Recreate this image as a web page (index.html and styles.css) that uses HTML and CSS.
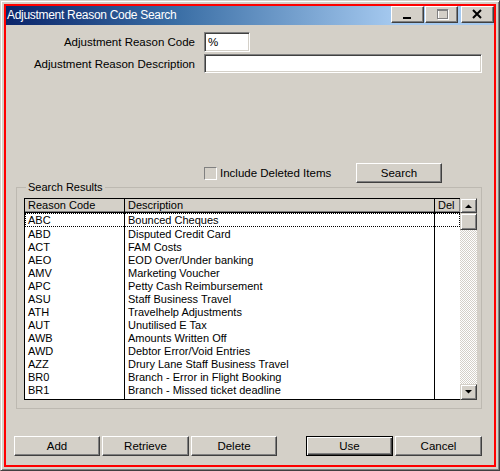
FILE: index.html
```html
<!DOCTYPE html>
<html>
<head>
<meta charset="utf-8">
<link rel="stylesheet" href="styles.css">
</head>
<body>
<div class="window">
  <div class="frame">
    <div class="titlebar">
      <span class="title">Adjustment Reason Code Search</span>
      <div class="tbtns">
        <div class="tbtn"><svg width="31" height="15" viewBox="0 0 31 15"><rect x="11" y="10" width="8" height="2" fill="#000"/></svg></div>
        <div class="tbtn"><svg width="31" height="15" viewBox="0 0 31 15"><rect x="12.5" y="3.5" width="10" height="9" fill="none" stroke="#fff"/><rect x="11.5" y="2.5" width="10" height="9" fill="none" stroke="#808080"/><rect x="11" y="2" width="11" height="2" fill="#808080"/></svg></div>
        <div class="tbtn close"><svg width="31" height="15" viewBox="0 0 31 15"><path d="M11 3L19 11M19 3L11 11" stroke="#000" stroke-width="2" fill="none"/></svg></div>
      </div>
    </div>
    <div class="client">
      <div class="form">
        <label class="lbl">Adjustment Reason Code</label>
        <div class="input code">%</div>
        <label class="lbl">Adjustment Reason Description</label>
        <div class="input desc"></div>
      </div>
      <div class="filter-row">
        <span class="check"></span>
        <span class="check-label">Include Deleted Items</span>
        <button class="btn">Search</button>
      </div>
      <fieldset class="results">
        <legend>Search Results</legend>
        <div class="listview">
          <div class="lv-main">
            <div class="lv-head">
              <div class="hc c1">Reason Code</div>
              <div class="hc c2">Description</div>
              <div class="hc c3">Del</div>
            </div>
            <div class="lv-body">
              <div class="row focus"><span class="c1">ABC</span><span class="c2">Bounced Cheques</span></div>
              <div class="row"><span class="c1">ABD</span><span class="c2">Disputed Credit Card</span></div>
              <div class="row"><span class="c1">ACT</span><span class="c2">FAM Costs</span></div>
              <div class="row"><span class="c1">AEO</span><span class="c2">EOD Over/Under banking</span></div>
              <div class="row"><span class="c1">AMV</span><span class="c2">Marketing Voucher</span></div>
              <div class="row"><span class="c1">APC</span><span class="c2">Petty Cash Reimbursement</span></div>
              <div class="row"><span class="c1">ASU</span><span class="c2">Staff Business Travel</span></div>
              <div class="row"><span class="c1">ATH</span><span class="c2">Travelhelp Adjustments</span></div>
              <div class="row"><span class="c1">AUT</span><span class="c2">Unutilised E Tax</span></div>
              <div class="row"><span class="c1">AWB</span><span class="c2">Amounts Written Off</span></div>
              <div class="row"><span class="c1">AWD</span><span class="c2">Debtor Error/Void Entries</span></div>
              <div class="row"><span class="c1">AZZ</span><span class="c2">Drury Lane Staff Business Travel</span></div>
              <div class="row"><span class="c1">BR0</span><span class="c2">Branch - Error in Flight Booking</span></div>
              <div class="row"><span class="c1">BR1</span><span class="c2">Branch - Missed ticket deadline</span></div>
            </div>
          </div>
          <div class="scrollbar">
            <div class="sb-btn up"><svg width="7" height="4" viewBox="0 0 7 4"><path d="M0 4H7L3.5 0.5Z" fill="#000"/></svg></div>
            <div class="sb-thumb"></div>
            <div class="sb-track"></div>
            <div class="sb-btn down"><svg width="7" height="4" viewBox="0 0 7 4"><path d="M0 0H7L3.5 3.5Z" fill="#000"/></svg></div>
          </div>
        </div>
      </fieldset>
      <div class="actions">
        <button class="btn w86">Add</button>
        <button class="btn w87">Retrieve</button>
        <button class="btn w86">Delete</button>
        <button class="btn w87 default use">Use</button>
        <button class="btn w87">Cancel</button>
      </div>
    </div>
  </div>
</div>
</body>
</html>
```
FILE: styles.css
```css
* { box-sizing: border-box; }
html, body { margin: 0; padding: 0; background: #d4d0c8; }
body { font-family: "Liberation Sans", Arial, sans-serif; font-size: 11.5px; color: #000; }

.window {
  width: 500px; height: 471px;
  border: 1px solid; border-color: #d4d0c8 #404040 #404040 #d4d0c8;
  box-shadow: inset 1px 1px #fff, inset -1px -1px #808080;
  padding: 3px;
  background: #d4d0c8;
}
.frame {
  height: 100%;
  border: 2px solid #ff0000;
  display: flex; flex-direction: column;
}
.titlebar {
  height: 19px; flex: none;
  display: flex; align-items: flex-start;
  background: linear-gradient(to right, #0a246a 0%, #3a6ea5 35%, #a6caf0 80%, #a6caf0 100%);
}
.title {
  color: #fff; font-size: 12px; letter-spacing: -0.3px;
  line-height: 19px; padding-left: 1px; white-space: nowrap;
  flex: 1;
}
.tbtns { display: flex; }
.tbtn {
  width: 33px; height: 17px;
  background: #d4d0c8;
  border: 1px solid; border-color: #fff #404040 #404040 #fff;
  box-shadow: inset -1px -1px #808080;
  display: flex; align-items: center; justify-content: center;
  margin-left: 1px;
}
.tbtn svg { display: block; }
.tbtn.close { margin-left: 3px; }

.client { flex: 1; display: flex; flex-direction: column; }

.form {
  display: grid;
  grid-template-columns: 189px auto;
  column-gap: 9px; row-gap: 2px;
  padding-top: 7px;
  align-items: center;
}
.lbl { text-align: right; white-space: nowrap; }
.input {
  background: #fff;
  border: 1px solid; border-color: #808080 #fff #fff #808080;
  box-shadow: inset 1px 1px #404040, inset -1px -1px #d4d0c8;
  padding: 0 3px; line-height: 18px;
}
.input.code { width: 46px; height: 20px; }
.input.desc { width: 278px; height: 19px; }

.filter-row {
  margin-top: 90px; height: 20px;
  display: flex; align-items: center;
  padding-left: 198px;
}
.check {
  width: 13px; height: 13px; flex: none;
  border: 1px solid; border-color: #808080 #fff #fff #808080;
  background: #d4d0c8;
}
.check-label { width: 139px; flex: none; padding-left: 3px; white-space: nowrap; }

.btn {
  font-family: inherit; font-size: 11.5px; color: #000;
  height: 20px; width: 86px; padding: 0;
  background: #d4d0c8;
  border: 1px solid; border-color: #fff #404040 #404040 #fff;
  box-shadow: inset -1px -1px #808080;
  flex: none;
}
.btn.w86 { width: 86px; }
.btn.w87 { width: 87px; }
.btn.default {
  border-color: #000;
  box-shadow: inset 1px 1px #fff, inset -1px -1px #404040, inset -2px -2px #808080;
}

.results {
  margin: -2px 0 0 10px;
  width: 466px; min-width: 0;
  border: 1px solid #bdb9b1;
  padding: 5px 4px 8px 7px;
}
.results legend {
  font-size: 11px; line-height: 12px;
  padding: 0 2px; margin-left: 2px;
  color: #000;
}
.listview { display: flex; height: 202px; }
.lv-main {
  width: 436px; height: 202px;
  border: 1px solid #000; border-right: none;
  display: flex; flex-direction: column;
  font-size: 11px;
}
.lv-head {
  height: 14px; flex: none; display: flex;
  background: #d4d0c8;
  border-bottom: 1px solid #000;
  box-shadow: inset 0 -1px #808080;
}
.hc {
  line-height: 13px; padding-left: 3px;
  border-right: 1px solid #000;
  white-space: nowrap;
}
.c1 { width: 100px; }
.c2 { width: 310px; }
.c3 { width: 25px; }
.hc.c3 { border-right-color: #808080; }
.lv-body {
  flex: 1;
  background:
    linear-gradient(#000, #000) 99px 0 / 1px 100% no-repeat,
    linear-gradient(#000, #000) 409px 0 / 1px 100% no-repeat,
    #fff;
}
.row { display: flex; height: 13px; line-height: 15px; white-space: nowrap; }
.row span { padding-left: 3px; overflow: hidden; }
.row.focus { outline: 1px dotted #000; outline-offset: -1px; height: 14px; line-height: 15px; }

.scrollbar { width: 17px; height: 202px; display: flex; flex-direction: column; }
.sb-btn, .sb-thumb {
  background: #d4d0c8;
  border: 1px solid; border-color: #d4d0c8 #404040 #404040 #d4d0c8;
  box-shadow: inset 1px 1px #fff, inset -1px -1px #808080;
  display: flex; align-items: center; justify-content: center;
  flex: none;
}
.sb-btn.up { height: 15px; }
.sb-btn.down { height: 16px; }
.sb-thumb { height: 17px; }
.sb-track {
  flex: 1;
  background: repeating-conic-gradient(#fff 0 25%, #d4d0c8 0 50%) 0 0 / 2px 2px;
}
.sb-btn svg { display: block; }

.actions {
  margin-top: 27px;
  display: flex; gap: 2px;
  padding-left: 8px;
}
.actions .use { margin-left: 27px; }
```
